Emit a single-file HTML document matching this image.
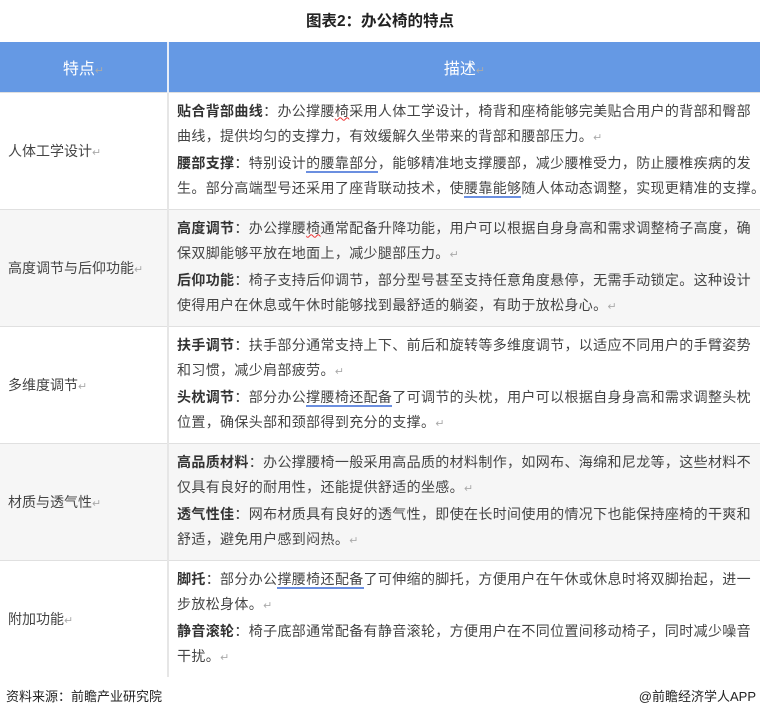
<!DOCTYPE html>
<html><head><meta charset="utf-8"><style>
*{margin:0;padding:0;box-sizing:border-box}
body{width:760px;height:715px;background:#fff;font-family:"Liberation Sans","Noto Sans CJK SC",sans-serif;color:#444;position:relative;overflow:hidden}
.title{position:absolute;top:9px;left:0;width:760px;text-align:center;font-size:15.5px;font-weight:bold;color:#222}
table{position:absolute;top:42px;left:0;width:760px;border-collapse:collapse;table-layout:fixed}
th{background:#6599e4;color:#fff;font-weight:normal;font-size:16px;height:50px;border-right:2px solid #e8eef8}
th:last-child{border-right:none}
td{height:117px;font-size:14px;border-top:1px solid #e0e0e0;vertical-align:middle}
td.l{padding-left:8px;border-right:2px solid #e6e6e6}
td.r{padding-left:8px;line-height:25px;white-space:nowrap;letter-spacing:0.35px;overflow:hidden}
tr.g td{background:#f6f6f6}
b{font-weight:bold;color:#333}
.m{color:#aaa;font-size:11px}
.u{border-bottom:2px solid #6b8fe0}
.w{text-decoration:underline wavy #e33;text-decoration-thickness:1px}
.foot{position:absolute;top:686px;font-size:13px;color:#222}
</style></head><body>
<div class="title">图表2：办公椅的特点</div>
<table>
<colgroup><col style="width:168px"><col style="width:592px"></colgroup>
<tr><th>特点<span class="m">↵</span></th><th>描述<span class="m">↵</span></th></tr>
<tr><td class="l">人体工学设计<span class="m">↵</span></td><td class="r"><b>贴合背部曲线</b>：办公撑腰<span class="w">椅</span>采用人体工学设计，椅背和座椅能够完美贴合用户的背部和臀部<br>曲线，提供均匀的支撑力，有效缓解久坐带来的背部和腰部压力。<span class="m">↵</span><br><b>腰部支撑</b>：特别设计<span class="u">的腰靠部分</span>，能够精准地支撑腰部，减少腰椎受力，防止腰椎疾病的发<br>生。部分高端型号还采用了座背联动技术，使<span class="u">腰靠能够</span>随人体动态调整，实现更精准的支撑。<span class="m">↵</span></td></tr>
<tr class="g"><td class="l">高度调节与后仰功能<span class="m">↵</span></td><td class="r"><b>高度调节</b>：办公撑腰<span class="w">椅</span>通常配备升降功能，用户可以根据自身身高和需求调整椅子高度，确<br>保双脚能够平放在地面上，减少腿部压力。<span class="m">↵</span><br><b>后仰功能</b>：椅子支持后仰调节，部分型号甚至支持任意角度悬停，无需手动锁定。这种设计<br>使得用户在休息或午休时能够找到最舒适的躺姿，有助于放松身心。<span class="m">↵</span></td></tr>
<tr><td class="l">多维度调节<span class="m">↵</span></td><td class="r"><b>扶手调节</b>：扶手部分通常支持上下、前后和旋转等多维度调节，以适应不同用户的手臂姿势<br>和习惯，减少肩部疲劳。<span class="m">↵</span><br><b>头枕调节</b>：部分办公<span class="u">撑腰椅还配备</span>了可调节的头枕，用户可以根据自身身高和需求调整头枕<br>位置，确保头部和颈部得到充分的支撑。<span class="m">↵</span></td></tr>
<tr class="g"><td class="l">材质与透气性<span class="m">↵</span></td><td class="r"><b>高品质材料</b>：办公撑腰椅一般采用高品质的材料制作，如网布、海绵和尼龙等，这些材料不<br>仅具有良好的耐用性，还能提供舒适的坐感。<span class="m">↵</span><br><b>透气性佳</b>：网布材质具有良好的透气性，即使在长时间使用的情况下也能保持座椅的干爽和<br>舒适，避免用户感到闷热。<span class="m">↵</span></td></tr>
<tr><td class="l">附加功能<span class="m">↵</span></td><td class="r"><b>脚托</b>：部分办公<span class="u">撑腰椅还配备</span>了可伸缩的脚托，方便用户在午休或休息时将双脚抬起，进一<br>步放松身体。<span class="m">↵</span><br><b>静音滚轮</b>：椅子底部通常配备有静音滚轮，方便用户在不同位置间移动椅子，同时减少噪音<br>干扰。<span class="m">↵</span></td></tr>
</table>
<div class="foot" style="left:6px">资料来源：前瞻产业研究院</div>
<div class="foot" style="right:4px">@前瞻经济学人APP</div>
</body></html>
